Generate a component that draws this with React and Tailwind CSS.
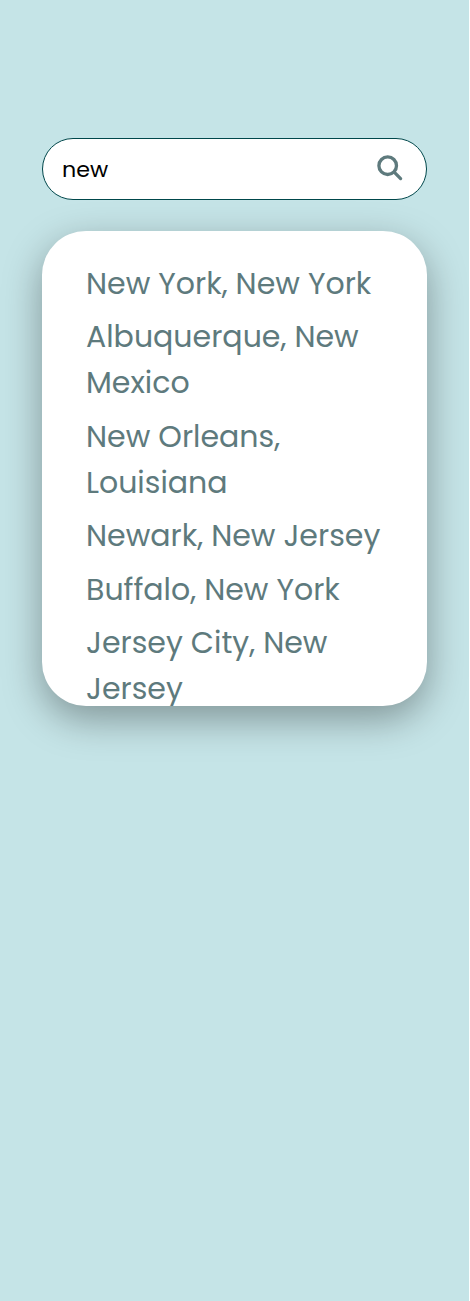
import React from "react";

const cities = [
  ["New York, New York"],
  ["Albuquerque, New", "Mexico"],
  ["New Orleans,", "Louisiana"],
  ["Newark, New Jersey"],
  ["Buffalo, New York"],
  ["Jersey City, New", "Jersey"],
];

function SearchIcon() {
  return (
    <svg viewBox="0 0 26 26" className="mb-[2px] size-[26px]" fill="none" stroke="#5e7a7d" strokeLinecap="round">
      <circle cx="10.7" cy="10.7" r="8.8" strokeWidth="3.3" />
      <path d="M17.2 17.2 L23.6 23.6" strokeWidth="3.3" />
    </svg>
  );
}

export default function App() {
  return (
    <main className="h-[1301px] w-full overflow-hidden border-r border-white bg-[#c5e4e7] px-[42px] pt-[138px] font-['Poppins','Inter',sans-serif]">
      <label className="flex h-[62px] w-[385px] items-center justify-between rounded-full border border-[#00474b] bg-white pr-[23.5px] pl-[19px]">
        <input
          defaultValue="new"
          className="w-[280px] bg-transparent pt-[2px] text-[22.2px] text-black outline-none"
        />
        <SearchIcon />
      </label>
      <ul className="mt-[31px] flex h-[475px] w-[385px] flex-col gap-[7.4px] overflow-hidden rounded-[44px] bg-white pt-[30px] pl-[44px] text-[30px] leading-[46px] text-[#5e7a7d] shadow-[0_13px_38px_rgba(0,0,0,0.35)]">
        {cities.map((lines) => (
          <li key={lines[0]} className="shrink-0">
            {lines.map((text) => (
              <span key={text} className="block whitespace-nowrap">
                {text}
              </span>
            ))}
          </li>
        ))}
      </ul>
    </main>
  );
}
